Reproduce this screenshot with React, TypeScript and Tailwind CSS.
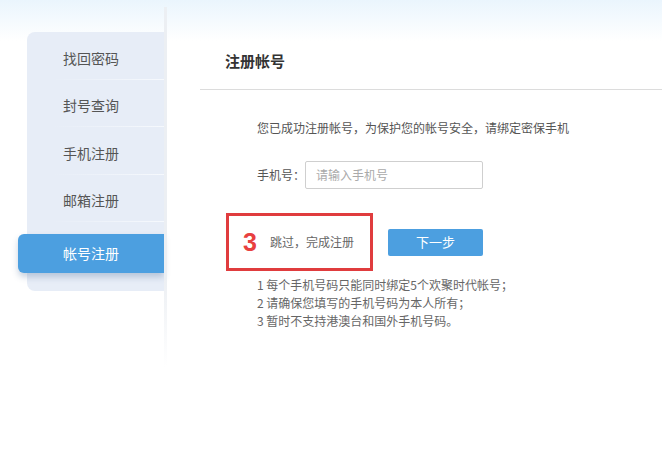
import React from "react";

const font = { fontFamily: '"Microsoft YaHei", "Noto Sans CJK SC", "Noto Sans", sans-serif' };

const items = ["找回密码", "封号查询", "手机注册", "邮箱注册"];

export default function App() {
  return (
    <div
      className="w-[662px] h-[454px] overflow-hidden bg-gradient-to-b from-[#eaf5fd] from-0% via-white via-[9%] to-white flex"
      style={font}
    >
      {/* Sidebar */}
      <div className="w-[164px] shrink-0 pt-[32px]">
        <div className="ml-[27px] w-[137px] bg-[#e7edf7] rounded-l-[8px] pb-[18px]">
          {items.map((t) => (
            <div key={t} className="relative h-[47.5px] flex items-center pl-[36px] pt-[5px] text-[14px] text-[#555]">
              {t}
              <div className="absolute bottom-0 left-[25px] right-0 h-px bg-gradient-to-r from-transparent to-[#f6f9fd]" />
            </div>
          ))}
          <div className="h-[12px]" />
          <div className="-ml-[9px] w-[146px] h-[39px] bg-[#4c9fe0] rounded-l-[6px] flex items-center pl-[45px] text-[14px] text-white shadow-[0_4px_6px_rgba(40,80,130,0.25)]">
            帐号注册
          </div>
        </div>
      </div>

      {/* Content edge shadow */}
      <div className="w-[3px] mt-[7px] h-[360px] shrink-0 bg-gradient-to-b from-[#eceff3] via-[#eceff3] via-[75%] to-transparent" />

      {/* Content */}
      <div className="flex-1 mt-[7px]">
        <div className="pl-[58px] pt-[43px] h-[82px] text-[15px] font-bold text-[#333]">注册帐号</div>
        <div className="ml-[33px] h-px bg-[#dcdcdc]" />
        <div className="pl-[90px] pt-[29px] text-[12px] text-[#555] leading-[18px]">
          您已成功注册帐号，为保护您的帐号安全，请绑定密保手机
        </div>
        <div className="pl-[90px] pt-[24px] flex items-center text-[12px] text-[#555]">
          <span className="w-[48px]">手机号：</span>
          <div className="w-[178px] h-[28px] border border-[#cfcfcf] rounded-[2px] flex items-center pl-[10px] text-[#aaa] bg-white">
            请输入手机号
          </div>
        </div>
        <div className="pl-[59px] pt-[24px] flex items-center">
          <div className="w-[147px] h-[58px] border-[3px] border-[#e03c3e] flex items-center pl-[14px]">
            <span className="text-[25px] leading-none text-[#e84040] font-bold" style={{ fontFamily: '"Liberation Sans", Arial, sans-serif' }}>3</span>
            <span className="ml-[13px] text-[12px] text-[#666]">跳过，完成注册</span>
          </div>
          <div className="ml-[15px] w-[95px] h-[27px] bg-[#4c9fe0] rounded-[2px] text-white text-[13px] flex items-center justify-center">
            下一步
          </div>
        </div>
        <div className="pl-[90px] pt-[5px] text-[12px] text-[#666] leading-[18px]">
          <div>1 每个手机号码只能同时绑定5个欢聚时代帐号；</div>
          <div>2 请确保您填写的手机号码为本人所有；</div>
          <div>3 暂时不支持港澳台和国外手机号码。</div>
        </div>
      </div>
    </div>
  );
}
